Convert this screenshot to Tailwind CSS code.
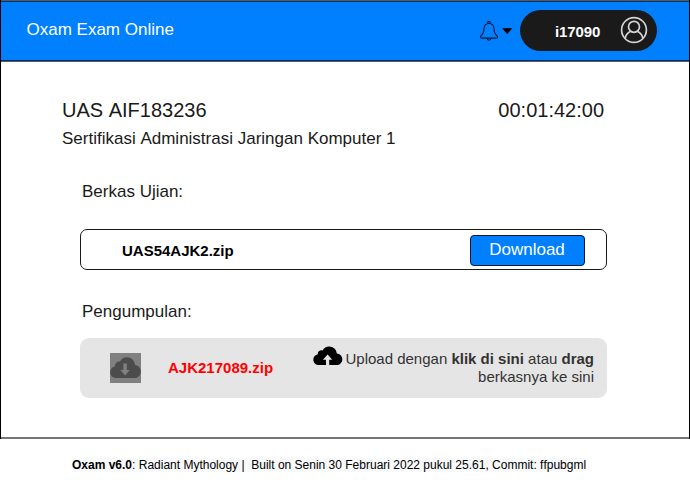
<!DOCTYPE html>
<html lang="id">
<head>
<meta charset="utf-8">
<title>Oxam Exam Online</title>
<script src="https://cdn.jsdelivr.net/npm/@tailwindcss/browser@4"></script>
</head>
<body class="w-[690px] h-[480px] overflow-hidden bg-white text-[#1a1a1a] font-['Liberation_Sans',Arial,sans-serif] [font-kerning:none]">
<div class="flex h-[439px] flex-col border-x border-black">
  <header class="flex h-[62px] shrink-0 items-start border-y border-[#555b62] bg-[#007fff]">
    <div class="flex h-[60px] w-full items-start border-y border-[#003468] pl-[25.5px] pr-[32px]">
      <h1 class="pt-[16px] text-[17px] leading-[24px] text-white whitespace-nowrap">Oxam Exam Online</h1>
      <svg class="ml-auto mt-[18px] mr-[7px] h-[22px] w-[34px] shrink-0" viewBox="0 0 34 22" fill="none">
        <path d="M10 3.2C6.8 3.6 5.1 5.8 5 8.8C4.9 12 4.6 13.2 3.3 14.5C2.5 15.3 1.4 16 1.4 17C1.4 17.9 2.2 18.1 3.2 18.1H16.8C17.8 18.1 18.6 17.9 18.6 17C18.6 16 17.5 15.3 16.7 14.5C15.4 13.2 15.1 12 15 8.8C14.9 5.8 13.2 3.6 10 3.2Z" stroke="#001a38" stroke-width="1.15"/>
        <path d="M8.6 3.2C8.3 .8 11.7 .8 11.4 3.2" stroke="#001a38" stroke-width="1.2"/>
        <path d="M8 18.3C8.2 20.9 11.8 20.9 12 18.3" stroke="#001a38" stroke-width="1.1"/>
        <path d="M23.8 8.5H32.6L28.2 13.8Z" fill="#000" stroke="#000" stroke-width=".7"/>
      </svg>
      <div class="mt-[8px] flex h-[41px] w-[137px] shrink-0 items-center rounded-full bg-[#1a1a1a] pl-[35px] pr-[9px]">
        <span class="text-[15px] font-bold leading-[16px] tracking-[-0.1px] text-white pt-[2px]">i17090</span>
        <svg class="ml-auto -mt-px h-[28px] w-[28px]" viewBox="0 0 28 28" fill="none" stroke="#d4d4d4" stroke-width="1.7">
          <circle cx="14" cy="14" r="12.4"/>
          <circle cx="14" cy="10.8" r="5.5"/>
          <path d="M5.1 22.5C5.7 18.7 7.6 16.6 10.6 15.2M17.4 15.2C20.4 16.6 22.3 18.7 22.9 22.5"/>
        </svg>
      </div>
    </div>
  </header>
  <main class="flex-1 border-b-2 border-[#767676] pl-[61px] pr-[82px]">
    <div class="flex justify-between pt-[36px] pr-[3px] text-[20px] leading-[24px]">
      <h2>UAS AIF183236</h2>
      <span>00:01:42:00</span>
    </div>
    <p class="mt-[7px] text-[17px] leading-[20px] whitespace-nowrap">Sertifikasi Administrasi Jaringan Komputer 1</p>
    <section class="ml-[18px]">
      <h3 class="mt-[33px] pl-[2px] text-[17px] leading-[20px]">Berkas Ujian:</h3>
      <div class="mt-[27px] flex h-[41px] w-[527px] items-center rounded-[7px] border border-[#1a1a1a] pl-[41px] pr-[21px]">
        <span class="text-[15px] font-bold leading-[20px] text-black pt-[3px]">UAS54AJK2.zip</span>
        <button class="ml-auto mt-[2px] h-[31px] w-[115px] rounded-[4px] border border-[#001a33] bg-[#007fff] pr-[1px] pb-[2px] text-[17px] leading-[26px] text-white">Download</button>
      </div>
    </section>
    <section class="ml-[18px]">
      <h3 class="mt-[32px] pl-[2px] text-[17px] leading-[20px]">Pengumpulan:</h3>
      <div class="mt-[16px] flex h-[60px] w-[527px] items-start rounded-[9px] bg-[#e5e5e5] pl-[30px] pr-[13px]">
        <svg class="mt-[15px] h-[30px] w-[31px] shrink-0" viewBox="0 0 31 30">
          <rect width="31" height="30" fill="#808080"/>
          <path d="M6.5 25C2.8 25 .2 22.5 .2 19.2C.2 16 2.4 13.8 5 13.2C4.8 10 7.6 8.2 10 8.6C11.4 5.6 13.9 4.2 16.8 4.2C21.4 4.2 24.8 7.6 25 12C28.4 12.4 30.8 15 30.8 18.4C30.8 22.4 28 25 24.3 25Z" fill="#4c4c4c"/>
          <path d="M13.4 10.6H16.8V17H19.8L15.1 22.4L10.4 17H13.4Z" fill="#808080"/>
        </svg>
        <span class="ml-[27px] mt-[20px] text-[15px] font-bold leading-[20px] text-[#ff0000]">AJK217089.zip</span>
        <svg class="ml-auto mt-[8px] h-[20px] w-[30px] shrink-0" viewBox="0 0 30 20">
          <path d="M6 19C2.8 19 .3 16.7 .3 13.7C.3 10.9 2.3 8.8 4.8 8.3C4.5 5.5 7.2 3.8 9.6 4.4C11 1.7 13.4 .4 16 .4C20.4 .4 23.5 3.5 23.8 7.5C27.1 7.8 29.3 10.2 29.3 13.2C29.3 16.7 26.7 19 23.4 19H16.2V13.8H19.2L14.6 8.5L10 13.8H13V19Z" fill="#000"/>
        </svg>
        <p class="ml-[2px] mt-[12px] shrink-0 text-right text-[15px] leading-[18px] text-[#333] whitespace-nowrap">Upload dengan <b>klik di sini</b> atau <b>drag</b><br>berkasnya ke sini</p>
      </div>
    </section>
  </main>
</div>
<footer class="pl-[72px] pt-[19px]">
  <p class="w-fit bg-[#f8f9fa] text-[12px] leading-[14px] text-black whitespace-pre"><b>Oxam v6.0</b>: Radiant Mythology |  Built on Senin 30 Februari 2022 pukul 25.61, Commit: ffpubgml</p>
</footer>
</body>
</html>
